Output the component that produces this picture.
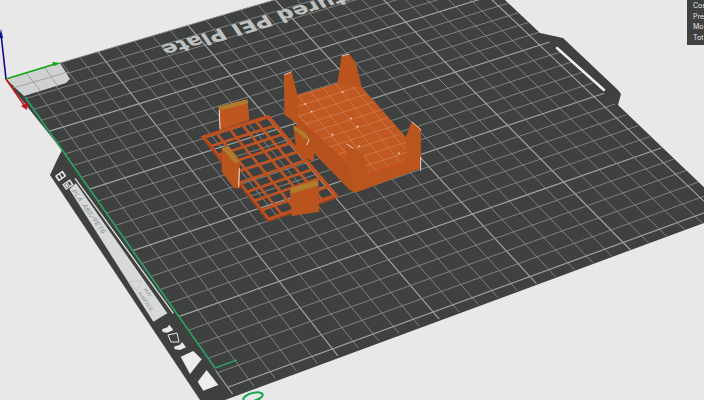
type P = [number, number];

// plate corners on screen, used to project the bed grid
const A: P = [5, 79];
const B: P = [450, -52];
const C: P = [731, 213];
const D: P = [234, 396];

function homography(u: number, v: number): P {
  const dx1 = B[0] - C[0];
  const dx2 = D[0] - C[0];
  const sx = A[0] - B[0] + C[0] - D[0];
  const dy1 = B[1] - C[1];
  const dy2 = D[1] - C[1];
  const sy = A[1] - B[1] + C[1] - D[1];
  const det = dx1 * dy2 - dx2 * dy1;
  const g = (sx * dy2 - dx2 * sy) / det;
  const h = (dx1 * sy - sx * dy1) / det;
  const w = g * u + h * v + 1;
  const x = (B[0] - A[0] + g * B[0]) * u + (D[0] - A[0] + h * D[0]) * v + A[0];
  const y = (B[1] - A[1] + g * B[1]) * u + (D[1] - A[1] + h * D[1]) * v + A[1];
  return [x / w, y / w];
}

function bilinear(q: P[], u: number, v: number): P {
  const top: P = [q[0][0] + (q[1][0] - q[0][0]) * u, q[0][1] + (q[1][1] - q[0][1]) * u];
  const bot: P = [q[3][0] + (q[2][0] - q[3][0]) * u, q[3][1] + (q[2][1] - q[3][1]) * u];
  return [top[0] + (bot[0] - top[0]) * v, top[1] + (bot[1] - top[1]) * v];
}

const steps = Array.from({ length: 26 }, (_, i) => i);

function BedGrid() {
  return (
    <g>
      {steps.map((i) => {
        const t = i / 25.6;
        const major = i % 5 === 0;
        const a = homography(t, 0);
        const b = homography(t, 1);
        const c = homography(0, t);
        const d = homography(1, t);
        return (
          <g key={i} stroke={major ? "#a0a2a0" : "#868886"} strokeWidth={major ? 1.2 : 0.9}>
            <line x1={a[0]} y1={a[1]} x2={b[0]} y2={b[1]} />
            <line x1={c[0]} y1={c[1]} x2={d[0]} y2={d[1]} />
          </g>
        );
      })}
    </g>
  );
}

function Lattice({ quad, nu, nv, stroke, width }: { quad: P[]; nu: number; nv: number; stroke: string; width: number }) {
  const lines = [];
  for (let i = 0; i <= nu; i++) {
    const a = bilinear(quad, i / nu, 0);
    const b = bilinear(quad, i / nu, 1);
    lines.push(<line key={"u" + i} x1={a[0]} y1={a[1]} x2={b[0]} y2={b[1]} stroke={stroke} strokeWidth={width} />);
  }
  for (let i = 0; i <= nv; i++) {
    const a = bilinear(quad, 0, i / nv);
    const b = bilinear(quad, 1, i / nv);
    lines.push(<line key={"v" + i} x1={a[0]} y1={a[1]} x2={b[0]} y2={b[1]} stroke={stroke} strokeWidth={width} />);
  }
  return <g>{lines}</g>;
}

const grateQuad: P[] = [[40, 291], [235, 230], [438, 466], [235, 538]];

const floorPoints = "322,168 445,130 515,145 650,295 655,362 535,405 470,370 325,235";
const floorDots: P[] = [[345, 192], [365, 215], [458, 156], [483, 235], [502, 260], [427, 284], [507, 318], [627, 340]];
const floorSteps = Array.from({ length: 22 }, (_, i) => i - 6);

function FloorGrid() {
  const ou = [37, -12];
  const ov = [20, 24];
  return (
    <g clipPath="url(#floor)" stroke="#d58a5e" strokeWidth="1.8">
      {floorSteps.map((i) => {
        const x = 345 + ou[0] * i;
        const y = 192 + ou[1] * i;
        const x2 = 345 + ov[0] * i;
        const y2 = 192 + ov[1] * i;
        return (
          <g key={i}>
            <line x1={x - ov[0] * 10} y1={y - ov[1] * 10} x2={x + ov[0] * 16} y2={y + ov[1] * 16} />
            <line x1={x2 - ou[0] * 10} y1={y2 - ou[1] * 10} x2={x2 + ou[0] * 10} y2={y2 + ou[1] * 10} />
          </g>
        );
      })}
    </g>
  );
}

function Parts() {
  return (
    <g transform="translate(190 40) scale(0.33333)">
      {/* grate */}
      <Lattice quad={grateQuad} nu={5} nv={9} stroke="#bf5422" width={8} />
      <polygon points="40,291 235,230 438,466 235,538" fill="none" stroke="#c2501f" strokeWidth="10" />
      <polyline points="44,298 235,544 438,474" fill="none" stroke="#9f3f19" strokeWidth="4" />

      {/* back wall of grate */}
      <polygon points="85,200 172,178 178,240 90,270" fill="#bd5620" />
      <polygon points="85,200 172,178 174,190 88,212" fill="#b07c2c" />
      <line x1="88" y1="210" x2="90" y2="268" stroke="#f0e6dc" strokeWidth="3" />

      {/* tray body */}
      <polygon
        points="282,105 305,95 322,165 442,130 455,48 478,42 498,70 515,140 648,292 665,245 692,268 692,385 495,458 480,450 372,340 372,365 340,350 318,300 320,250 283,225"
        fill="#b9541e"
      />
      <polygon points={floorPoints} fill="#bf5821" />
      <clipPath id="floor">
        <polygon points={floorPoints} />
      </clipPath>
      <FloorGrid />
      {floorDots.map((d) => (
        <circle key={d.join()} cx={d[0]} cy={d[1]} r="2.5" fill="#f6efe8" />
      ))}

      <polygon points="325,235 470,370 495,458 480,450 372,340 320,262" fill="#b4511c" />
      <polygon points="468,312 492,325 520,340 535,405 650,362 648,292 665,245 692,268 692,385 495,458 470,370" fill="#bb551e" />
      <polyline points="535,405 655,362" fill="none" stroke="#d63f2a" strokeWidth="2.5" />
      <polyline points="325,235 470,370" fill="none" stroke="#d63f2a" strokeWidth="2.5" />
      <polyline points="470,312 490,325" fill="none" stroke="#f4e8e0" strokeWidth="2.5" />
      <polyline points="665,245 692,268 692,272" fill="none" stroke="#f4e8e0" strokeWidth="2.5" />
      <line x1="692" y1="350" x2="692" y2="392" stroke="#f4e8e0" strokeWidth="2.5" />
      <polyline points="282,105 305,95" fill="none" stroke="#f0dccc" strokeWidth="2.5" />
      <polyline points="455,48 478,42" fill="none" stroke="#f0dccc" strokeWidth="2.5" />

      {/* side post between tray and grate */}
      <polygon points="310,255 345,278 372,320 372,365 345,350 318,325" fill="#b7521c" />
      <polygon points="310,255 345,278 358,295 350,300 312,268" fill="#b07c2c" />
      <polyline points="350,315 358,297" fill="none" stroke="#f4e8e0" strokeWidth="2.5" />

      {/* middle and front walls of grate */}
      <polygon points="95,325 115,318 150,365 150,445 132,445 95,395" fill="#b9541e" />
      <polygon points="95,325 115,318 150,365 135,370" fill="#b07c2c" />
      <line x1="148" y1="385" x2="146" y2="440" stroke="#f0e6dc" strokeWidth="3" />
      <polygon points="300,450 385,420 388,515 305,528" fill="#b9541e" />
      <polygon points="300,445 383,420 385,436 302,462" fill="#b07c2c" />
    </g>
  );
}

function LeftTab() {
  return (
    <g transform="translate(30 150) scale(0.33333)">
      <polygon points="452,620 490,603 515,628 480,672" fill="#ecedec" />
      <polygon points="503,695 530,660 565,705 520,722" fill="#ecedec" />
      <polygon points="118,118 138,100 412,490 370,515" fill="#d6d9d8" />
      <line x1="135" y1="85" x2="430" y2="490" stroke="#dcdedd" strokeWidth="4" />

      {/* material badges */}
      <g transform="rotate(-35 92 78)">
        <rect x="78" y="68" width="28" height="20" fill="#e8e9e8" />
        <rect x="83" y="72" width="7" height="12" fill="#3f4140" />
        <rect x="94" y="72" width="7" height="12" fill="#3f4140" />
      </g>
      <g transform="rotate(-35 114 104)">
        <rect x="100" y="94" width="28" height="20" fill="#e8e9e8" />
        <rect x="105" y="98" width="8" height="12" fill="none" stroke="#3f4140" strokeWidth="2" />
        <rect x="117" y="98" width="6" height="12" fill="#3f4140" />
      </g>

      <polygon points="298,395 333,392 320,422" fill="none" stroke="#b9bcbb" strokeWidth="2" />
      <text transform="matrix(0.58 0.82 -0.95 0.3 124 122)" fontFamily="Liberation Mono, monospace" fontSize="22" fill="#8f9291">
        PLA ABS/PETG
      </text>
      <text transform="matrix(0.58 0.82 -0.95 0.3 340 418)" fontFamily="Liberation Mono, monospace" fontSize="16" fill="#8f9291">
        HOT
      </text>
      <text transform="matrix(0.58 0.82 -0.95 0.3 322 428)" fontFamily="Liberation Mono, monospace" fontSize="16" fill="#8f9291">
        SURFACE
      </text>

      {/* flip arrows and square */}
      <polygon points="414,555 441,549 447,576 423,576" fill="none" stroke="#e8e9e8" strokeWidth="3" />
      <polygon points="396,538 412,532 418,524 430,540 412,548 398,546" fill="#e8e9e8" />
      <polygon points="432,590 450,584 456,576 468,592 450,600 434,598" fill="#e8e9e8" />
    </g>
  );
}

export default function App() {
  return (
    <div className="relative w-[704px] h-[400px] overflow-hidden bg-[#e8e8e8]">
      <svg viewBox="0 0 704 400" className="block w-full h-full">
        {/* plate with its handle and lower left tab */}
        <polygon
          points="5,79 450,-52 540,33 563,38 618,90 621,94 618,105 731,213 225,400 200,400 50,175 57,160 62,150"
          fill="#3f4140"
        />
        <clipPath id="bed">
          <polygon points="5,79 450,-52 731,213 222,398 215,368 25,97" />
        </clipPath>
        <g clipPath="url(#bed)">
          <BedGrid />
        </g>

        <polygon points="6,79 60,63 70,79 66,83 24,96" fill="#cfd1d0" />
        <g stroke="#9a9c9b" strokeWidth="0.9">
          <line x1="26" y1="73" x2="40" y2="90" />
          <line x1="45" y1="68" x2="57" y2="85" />
          <line x1="13" y1="88" x2="68" y2="72" />
        </g>

        <text
          transform="matrix(-1.02 0.3 -0.48 -0.72 381 -19)"
          fontFamily="DejaVu Sans, sans-serif"
          fontWeight="700"
          fontSize="21"
          fill="#bfc1c0"
        >
          Textured PEI Plate
        </text>

        <polyline points="557,48 604,90" fill="none" stroke="#f2f3f2" strokeWidth="2.5" strokeLinecap="round" />

        <polyline points="25,97 215,368 237,360" fill="none" stroke="#2f9a62" strokeWidth="1.8" />

        <LeftTab />
        <Parts />

        {/* axes */}
        <line x1="6" y1="79" x2="1" y2="34" stroke="#0c0c92" strokeWidth="1.6" />
        <polygon points="1,29 -1,38 3,38" fill="#0c0c92" />
        <line x1="6" y1="79" x2="55" y2="64" stroke="#0fa60f" strokeWidth="1.6" />
        <polygon points="61,63 52,62 54,66" fill="#0fa60f" />
        <line x1="6" y1="79" x2="24" y2="105" stroke="#c41818" strokeWidth="1.6" />
        <polygon points="27,110 21,106 28,102" fill="#c41818" />

        <ellipse cx="253" cy="397" rx="10" ry="4" fill="none" stroke="#16a34a" strokeWidth="2" transform="rotate(-15 253 397)" />
      </svg>

      <div className="absolute right-0 top-0 w-[17px] h-[45px] overflow-hidden bg-[#3f4140] pl-[6px] pt-[1px] font-['Inter',sans-serif] text-[7px] leading-[10.5px] text-[#e8e8e8] whitespace-nowrap">
        <p>Cos</p>
        <p>Pre</p>
        <p>Mo</p>
        <p>Tot</p>
      </div>
    </div>
  );
}
